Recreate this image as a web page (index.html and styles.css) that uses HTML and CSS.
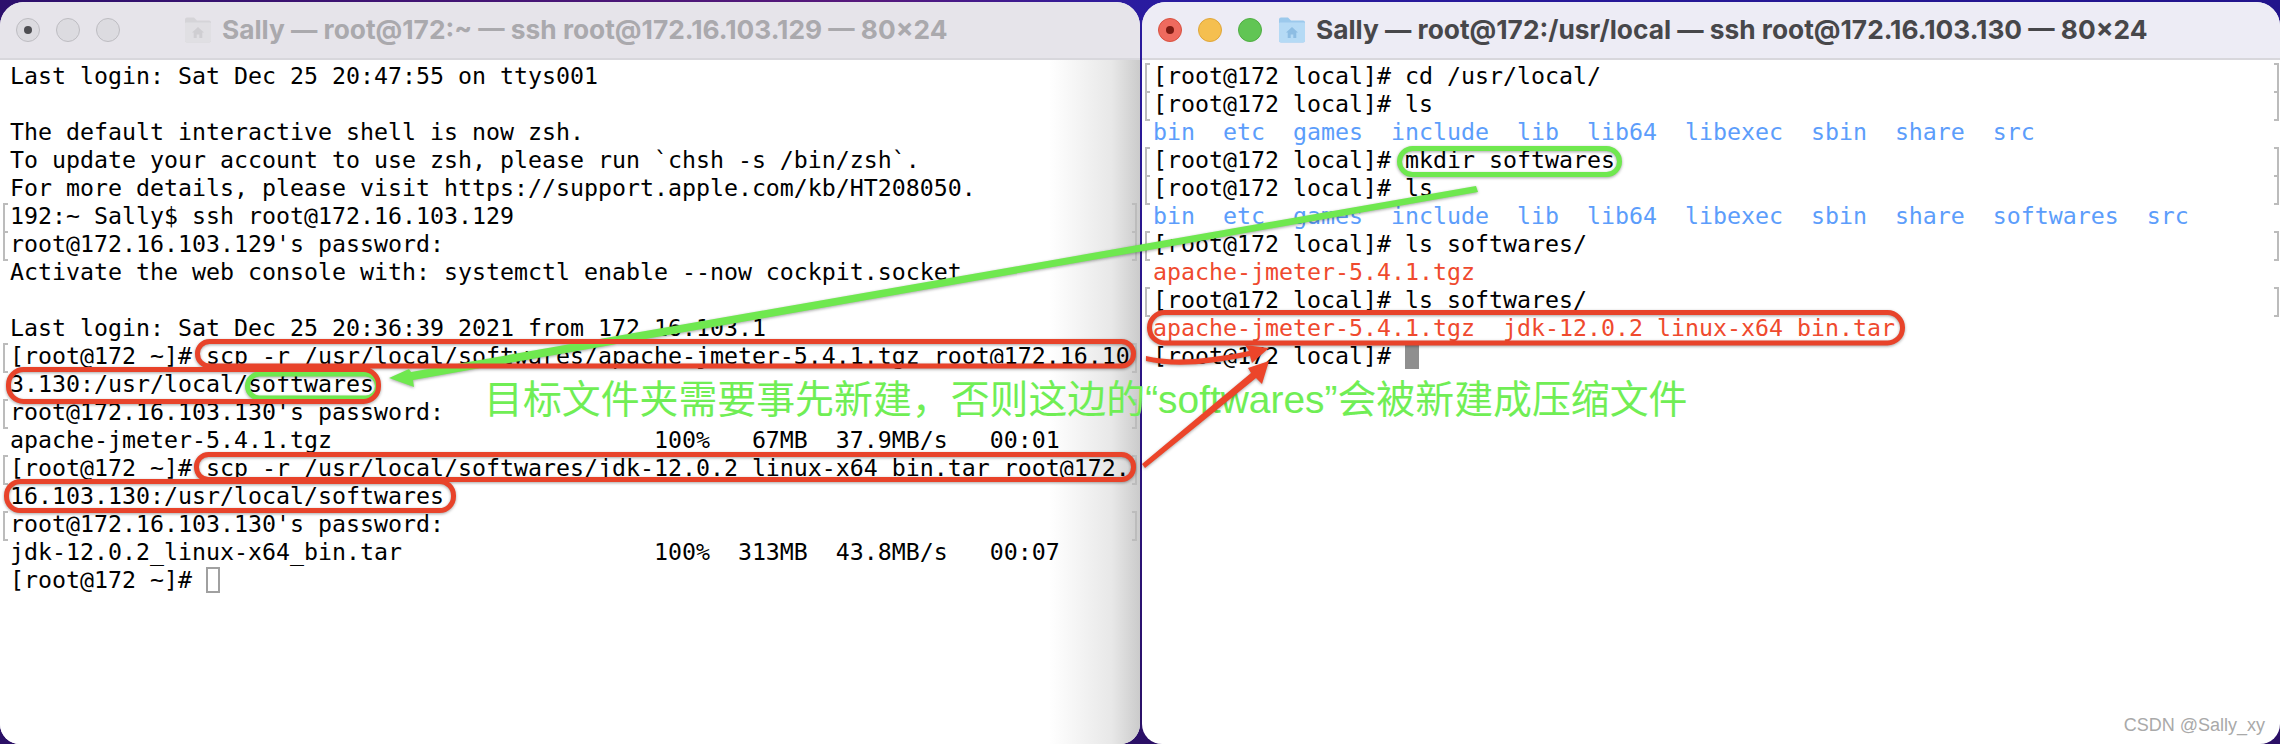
FILE: index.html
```html
<!DOCTYPE html>
<html lang="zh">
<head>
<meta charset="utf-8">
<title>Terminal windows</title>
<link rel="stylesheet" href="styles.css">
</head>
<body>
<main class="desktop">
  <section class="window window-left">
    <header class="titlebar titlebar-inactive">
      <div class="lights">
        <span class="light light-off light-dot"></span>
        <span class="light light-off"></span>
        <span class="light light-off"></span>
      </div>
      <svg class="folder folder-left" viewBox="0 0 28 28"><path class="f-back" d="M1 3.500a2 2 0 0 1 2-2h7l3 3h12a2 2 0 0 1 2 2v18a2 2 0 0 1-2 2H3a2 2 0 0 1-2-2z"/><path class="f-front" d="M1 7.500a1 1 0 0 1 1-1h24a1 1 0 0 1 1 1v17a2 2 0 0 1-2 2H3a2 2 0 0 1-2-2z"/><path class="f-home" d="M14 11l-6 5.500h1.700V22h3v-3.500h2.600V22h3v-5.500H20z"/></svg>
      <h1 class="title">Sally — root@172:~ — ssh root@172.16.103.129 — 80×24</h1>
    </header>
    <div class="terminal terminal-left">
      <div class="row">Last login: Sat Dec 25 20:47:55 on ttys001</div>
      <div class="row"> </div>
      <div class="row">The default interactive shell is now zsh.</div>
      <div class="row">To update your account to use zsh, please run `chsh -s /bin/zsh`.</div>
      <div class="row">For more details, please visit https://support.apple.com/kb/HT208050.</div>
      <div class="row mark">192:~ Sally$ ssh root@172.16.103.129</div>
      <div class="row mark">root@172.16.103.129's password:</div>
      <div class="row">Activate the web console with: systemctl enable --now cockpit.socket</div>
      <div class="row"> </div>
      <div class="row">Last login: Sat Dec 25 20:36:39 2021 from 172.16.103.1</div>
      <div class="row mark">[root@172 ~]# scp -r /usr/local/softwares/apache-jmeter-5.4.1.tgz root@172.16.10</div>
      <div class="row">3.130:/usr/local/softwares</div>
      <div class="row mark">root@172.16.103.130's password:</div>
      <div class="row">apache-jmeter-5.4.1.tgz                       100%   67MB  37.9MB/s   00:01</div>
      <div class="row mark">[root@172 ~]# scp -r /usr/local/softwares/jdk-12.0.2_linux-x64_bin.tar root@172.</div>
      <div class="row">16.103.130:/usr/local/softwares</div>
      <div class="row mark">root@172.16.103.130's password:</div>
      <div class="row">jdk-12.0.2_linux-x64_bin.tar                  100%  313MB  43.8MB/s   00:07</div>
      <div class="row">[root@172 ~]# <span class="cursor cursor-hollow"></span></div>
    </div>
  </section>

  <section class="window window-right">
    <header class="titlebar">
      <div class="lights">
        <span class="light light-red light-dot"></span>
        <span class="light light-yellow"></span>
        <span class="light light-green"></span>
      </div>
      <svg class="folder folder-right" viewBox="0 0 28 28"><path class="f-back" d="M1 3.500a2 2 0 0 1 2-2h7l3 3h12a2 2 0 0 1 2 2v18a2 2 0 0 1-2 2H3a2 2 0 0 1-2-2z"/><path class="f-front" d="M1 7.500a1 1 0 0 1 1-1h24a1 1 0 0 1 1 1v17a2 2 0 0 1-2 2H3a2 2 0 0 1-2-2z"/><path class="f-home" d="M14 11l-6 5.500h1.700V22h3v-3.500h2.600V22h3v-5.500H20z"/></svg>
      <h1 class="title">Sally — root@172:/usr/local — ssh root@172.16.103.130 — 80×24</h1>
    </header>
    <div class="terminal terminal-right">
      <div class="row mark">[root@172 local]# cd /usr/local/</div>
      <div class="row mark">[root@172 local]# ls</div>
      <div class="row blue">bin  etc  games  include  lib  lib64  libexec  sbin  share  src</div>
      <div class="row mark">[root@172 local]# mkdir softwares</div>
      <div class="row mark">[root@172 local]# ls</div>
      <div class="row blue">bin  etc  games  include  lib  lib64  libexec  sbin  share  softwares  src</div>
      <div class="row mark">[root@172 local]# ls softwares/</div>
      <div class="row red">apache-jmeter-5.4.1.tgz</div>
      <div class="row mark">[root@172 local]# ls softwares/</div>
      <div class="row red">apache-jmeter-5.4.1.tgz  jdk-12.0.2_linux-x64_bin.tar</div>
      <div class="row">[root@172 local]# <span class="cursor cursor-solid"></span></div>
    </div>
  </section>

  <svg class="marks" viewBox="0 0 2280 744" aria-hidden="true">
    <rect class="box box-green" x="247.500" y="374" width="130" height="24" rx="12"/>
    <path class="fill-green" d="M1476 186L1478 192L413 380L414 387L389 378L409 369L411 372Z"/>
    <rect class="box box-green" x="1399.500" y="148.500" width="220" height="26" rx="13"/>
    <rect class="box box-red" x="197.500" y="341.500" width="936" height="24.500" rx="12"/>
    <rect class="box box-red" x="8.500" y="369.500" width="370" height="32" rx="15"/>
    <rect class="box box-red" x="196.500" y="454.500" width="937" height="25" rx="12"/>
    <rect class="box box-red" x="6.500" y="481.500" width="447" height="29" rx="14"/>
    <rect class="box box-red" x="1149.500" y="312.500" width="753" height="30.500" rx="15"/>
  </svg>
  <p class="note">目标文件夹需要事先新建，否则这边的“softwares”会被新建成压缩文件</p>
  <svg class="marks" viewBox="0 0 2280 744" aria-hidden="true">
    <path class="fill-red" d="M1146 356C1170 362 1205 360 1249 351L1245 345L1269 348L1252 363L1250 356C1205 366 1170 367 1146 361Z"/>
    <path class="fill-red" d="M1142 464L1251 373L1248 368L1269 361L1262 384L1256 378L1145 468Z"/>
  </svg>
  <p class="watermark">CSDN @Sally_xy</p>
</main>
</body>
</html>
```
FILE: styles.css
```css
* { box-sizing: border-box; }

html, body {
  margin: 0;
  height: 100%;
}

body {
  width: 2280px;
  height: 744px;
  overflow: hidden;
  background:
    linear-gradient(180deg, rgba(43, 16, 102, 0) 0, rgba(43, 16, 102, 1) 100%),
    linear-gradient(90deg, #2c0f6c 0, #57197c 38%, #2a1ba0 50%, #22148c 100%);
}

.desktop {
  position: relative;
  display: flex;
  gap: 2px;
  width: 2280px;
  height: 744px;
  padding-top: 2px;
}

.window {
  display: flex;
  flex-direction: column;
  border-radius: 24px 24px 20px 20px;
  overflow: hidden;
  background: #fff;
}

.window-left { width: 1140px; }
.window-right { flex: 1; }

.titlebar {
  display: flex;
  align-items: center;
  flex: none;
  height: 58px;
  padding-left: 16px;
  background: #edecf5;
  border-bottom: 2px solid #d8d7dc;
  color: #47474a;
}

.titlebar-inactive {
  background: #e6e4ea;
  color: #aaa9ad;
}

.lights {
  display: flex;
  gap: 16px;
}

.light {
  display: flex;
  align-items: center;
  justify-content: center;
  width: 24px;
  height: 24px;
  border-radius: 50%;
}

.light-dot::after {
  content: "";
  width: 8px;
  height: 8px;
  border-radius: 50%;
  background: #4e4e52;
}

.light-off {
  background: #dcdbe0;
  border: 1px solid #bdbcc1;
}

.light-red { background: #ee6a5e; border: 1px solid #d8503f; }
.light-red::after { background: #7c1a12; }
.light-yellow { background: #f5bf4f; border: 1px solid #dfa63a; }
.light-green { background: #61c554; border: 1px solid #50ad43; }

.folder {
  flex: none;
  width: 28px;
  height: 28px;
}

.folder-left { margin-left: 64px; }
.folder-right { margin-left: 16px; }

.folder-left .f-back { fill: #d5d4d8; }
.folder-left .f-front { fill: #e0dfe3; }
.folder-left .f-home { fill: #cfced2; }
.folder-right .f-back { fill: #9cc9ec; }
.folder-right .f-front { fill: #b5daf5; }
.folder-right .f-home { fill: #8dbde3; }

.title {
  margin: 0 0 0 10px;
  font-family: "Inter", "Liberation Sans", sans-serif;
  font-size: 26.300px;
  font-weight: 700;
  line-height: 32px;
  white-space: nowrap;
}

.terminal {
  flex: 1;
  padding-top: 2px;
  font-family: "DejaVu Sans Mono", "Liberation Mono", monospace;
  font-size: 23.25px;
  line-height: 28px;
  color: #000;
}

.terminal-left {
  background: linear-gradient(90deg, #fff 0, #fff 92%, #e8e8e8 97.500%, #cbcbcb 100%);
}

.row {
  position: relative;
  height: 28px;
  padding-left: 10px;
  white-space: pre;
}

.mark::before,
.mark::after {
  content: "";
  position: absolute;
  top: 1px;
  width: 3px;
  height: 26px;
  border: 2px solid #bcbcbc;
}

.mark::before {
  left: 3px;
  border-right: 0;
}

.mark::after {
  right: 3px;
  border-left: 0;
}

.terminal-right .row { padding-left: 11px; }
.terminal-right .mark::before { left: 3px; }
.terminal-right .mark::after { right: 1px; }

.blue { color: #5c9dfb; }
.red { color: #ef4a2e; }

.cursor {
  display: inline-block;
  width: 14px;
  vertical-align: -5px;
}

.cursor-hollow {
  height: 26px;
  border: 2px solid #a0a0a0;
}

.cursor-solid {
  height: 24px;
  background: #8f8f8f;
}

.marks {
  position: absolute;
  left: 0;
  top: 0;
  width: 2280px;
  height: 744px;
  filter: drop-shadow(0 1px 1.500px rgba(0, 0, 0, 0.35));
}

.box {
  fill: none;
  stroke-width: 5px;
}

.box-red { stroke: #e8432a; }
.box-green { stroke: #6fe84f; }
.fill-red { fill: #ec452a; }
.fill-green { fill: #6fe84f; }

.note {
  position: absolute;
  left: 484px;
  top: 375px;
  margin: 0;
  font-family: "Liberation Sans", "Noto Sans CJK SC", sans-serif;
  font-size: 38.900px;
  font-weight: 400;
  line-height: 50px;
  color: #70ee55;
  white-space: nowrap;
}

.watermark {
  position: absolute;
  right: 15px;
  top: 714px;
  margin: 0;
  font-family: "Liberation Sans", sans-serif;
  font-size: 18px;
  line-height: 22px;
  color: #a9a9a9;
  white-space: nowrap;
}
```
